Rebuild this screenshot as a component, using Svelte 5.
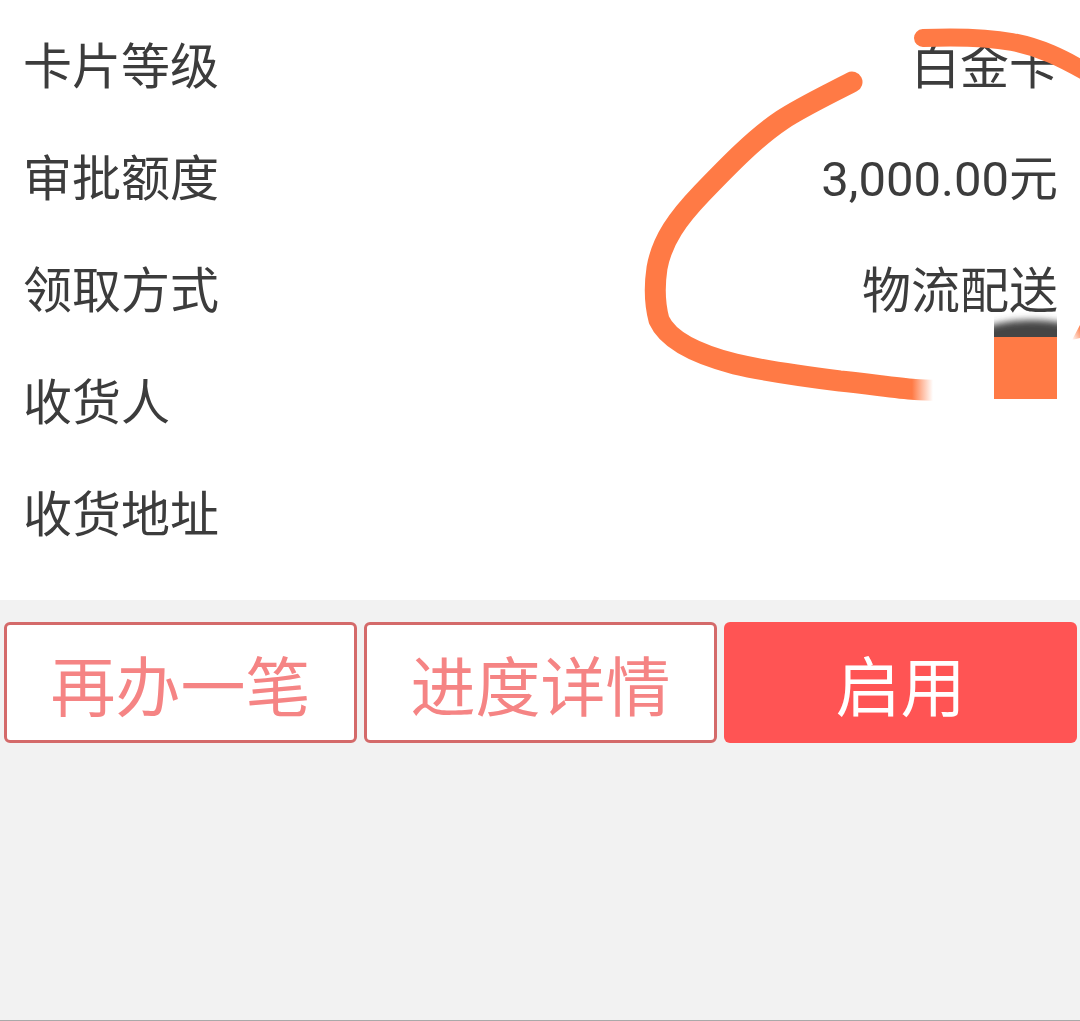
<script lang="ts">
  const rows = [
    { label: '卡片等级', value: '白金卡' },
    { label: '审批额度', value: '3,000.00元' },
    { label: '领取方式', value: '物流配送' },
    { label: '收货人', value: '' },
    { label: '收货地址', value: '' },
  ];
</script>

<div class="page">
  <section class="info">
    {#each rows as row (row.label)}
      <div class="row">
        <span>{row.label}</span>
        <span>{row.value}</span>
      </div>
    {/each}
  </section>

  <div class="actions">
    <button type="button" class="btn outline">再办一笔</button>
    <button type="button" class="btn outline">进度详情</button>
    <button type="button" class="btn primary">启用</button>
  </div>

  <!-- hand-drawn markup on top of the screenshot -->
  <svg class="scribble" width="1080" height="420" viewBox="0 0 1080 420" fill="none" aria-hidden="true">
    <defs>
      <linearGradient id="fade" gradientUnits="userSpaceOnUse" x1="912" y1="0" x2="933" y2="0">
        <stop offset="0" stop-color="#ff7a45" />
        <stop offset="1" stop-color="#ff7a45" stop-opacity="0" />
      </linearGradient>
      <linearGradient id="sliver" x1="0" y1="1" x2="1" y2="0">
        <stop offset="0" stop-color="#ff7a45" stop-opacity="0" />
        <stop offset="1" stop-color="#ff7a45" />
      </linearGradient>
      <clipPath id="smudge-clip">
        <rect x="994" y="300" width="63" height="37" />
      </clipPath>
      <filter id="soft" x="-20%" y="-50%" width="140%" height="200%">
        <feGaussianBlur stdDeviation="3.500" />
      </filter>
    </defs>
    <path
      class="ink main"
      d="M852 82 C825 96 800 108 782 120 C755 138 728 166 702 193 C678 218 662 240 657 268 C654 288 655 305 659 320 C668 340 696 354 735 364 C765 371 800 376 840 381 C870 384 895 388 915 389.500 C922 390 928 390 936 390.500"
    />
    <path class="ink top" d="M923 38 C950 37 985 37 1012 42 C1040 47 1062 58 1090 74" />
    <path d="M1072 340 L1080 325 L1080 338 Z" fill="url(#sliver)" />
    <g clip-path="url(#smudge-clip)">
      <ellipse cx="1032" cy="342" rx="62" ry="22" fill="#444" filter="url(#soft)" />
    </g>
    <rect x="994" y="337" width="63" height="62" fill="#ff7a45" />
  </svg>
</div>

<style>
  :global(body) {
    background: #f2f2f2;
  }

  .page {
    position: relative;
    height: 1021px;
    box-sizing: border-box;
    border-bottom: 1px solid #a9a9a9;
    background: #f2f2f2;
    font-family: 'Roboto', 'Noto Sans CJK SC', sans-serif;
  }

  .info {
    height: 600px;
    box-sizing: border-box;
    padding: 6px 22px 0 23px;
    background: #fff;
    color: #3c3c3c;
    font-size: 49px;
  }

  .row {
    display: flex;
    justify-content: space-between;
    align-items: center;
    height: 112px;
  }

  .actions {
    display: grid;
    grid-template-columns: repeat(3, 353px);
    gap: 7px;
    padding: 22px 0 0 4px;
  }

  .btn {
    height: 121px;
    box-sizing: border-box;
    border-radius: 6px;
    font-family: inherit;
    font-size: 65px;
    padding: 0;
  }

  .outline {
    border: 3px solid #d46a6a;
    background: #fff;
    color: #f58484;
  }

  .primary {
    border: none;
    background: #ff5454;
    color: #fff;
  }

  .scribble {
    position: absolute;
    top: 0;
    left: 0;
  }

  .ink {
    stroke: #ff7a45;
    stroke-linecap: round;
    stroke-linejoin: round;
  }

  .main {
    stroke: url(#fade);
    stroke-width: 21;
  }

  .top {
    stroke-width: 18;
  }
</style>
